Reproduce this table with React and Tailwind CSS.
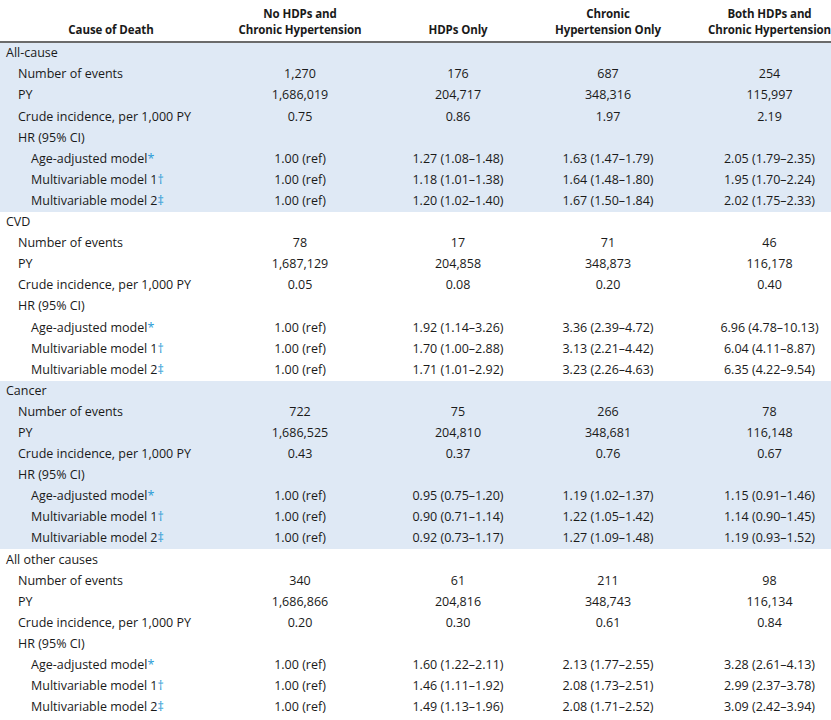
import React from "react";

const sections = [
  {
    name: "All-cause",
    shaded: true,
    events: ["1,270", "176", "687", "254"],
    py: ["1,686,019", "204,717", "348,316", "115,997"],
    crude: ["0.75", "0.86", "1.97", "2.19"],
    age: ["1.00 (ref)", "1.27 (1.08–1.48)", "1.63 (1.47–1.79)", "2.05 (1.79–2.35)"],
    m1: ["1.00 (ref)", "1.18 (1.01–1.38)", "1.64 (1.48–1.80)", "1.95 (1.70–2.24)"],
    m2: ["1.00 (ref)", "1.20 (1.02–1.40)", "1.67 (1.50–1.84)", "2.02 (1.75–2.33)"],
  },
  {
    name: "CVD",
    shaded: false,
    events: ["78", "17", "71", "46"],
    py: ["1,687,129", "204,858", "348,873", "116,178"],
    crude: ["0.05", "0.08", "0.20", "0.40"],
    age: ["1.00 (ref)", "1.92 (1.14–3.26)", "3.36 (2.39–4.72)", "6.96 (4.78–10.13)"],
    m1: ["1.00 (ref)", "1.70 (1.00–2.88)", "3.13 (2.21–4.42)", "6.04 (4.11–8.87)"],
    m2: ["1.00 (ref)", "1.71 (1.01–2.92)", "3.23 (2.26–4.63)", "6.35 (4.22–9.54)"],
  },
  {
    name: "Cancer",
    shaded: true,
    events: ["722", "75", "266", "78"],
    py: ["1,686,525", "204,810", "348,681", "116,148"],
    crude: ["0.43", "0.37", "0.76", "0.67"],
    age: ["1.00 (ref)", "0.95 (0.75–1.20)", "1.19 (1.02–1.37)", "1.15 (0.91–1.46)"],
    m1: ["1.00 (ref)", "0.90 (0.71–1.14)", "1.22 (1.05–1.42)", "1.14 (0.90–1.45)"],
    m2: ["1.00 (ref)", "0.92 (0.73–1.17)", "1.27 (1.09–1.48)", "1.19 (0.93–1.52)"],
  },
  {
    name: "All other causes",
    shaded: false,
    events: ["340", "61", "211", "98"],
    py: ["1,686,866", "204,816", "348,743", "116,134"],
    crude: ["0.20", "0.30", "0.61", "0.84"],
    age: ["1.00 (ref)", "1.60 (1.22–2.11)", "2.13 (1.77–2.55)", "3.28 (2.61–4.13)"],
    m1: ["1.00 (ref)", "1.46 (1.11–1.92)", "2.08 (1.73–2.51)", "2.99 (2.37–3.78)"],
    m2: ["1.00 (ref)", "1.49 (1.13–1.96)", "2.08 (1.71–2.52)", "3.09 (2.42–3.94)"],
  },
];

const GRID = "grid grid-cols-[222px_156px_160px_170px_123px]";

function Row({ label, indent, values, mark }) {
  const pad = indent === 0 ? "pl-[6px]" : indent === 1 ? "pl-[18px]" : "pl-[31px]";
  return (
    <div className={`${GRID} h-[21.1px] items-center`}>
      <div className={`${pad} whitespace-nowrap`}>
        {label}
        {mark && <span className="text-[#2a9bd6]">{mark}</span>}
      </div>
      {[0, 1, 2, 3].map((i) => (
        <div key={i} className={`text-center whitespace-nowrap ${i === 2 ? "pr-[30px]" : ""}`}>
          {values ? values[i] : ""}
        </div>
      ))}
    </div>
  );
}

export default function App() {
  return (
    <div
      className="w-[831px] h-[720px] overflow-hidden bg-white text-[#1a1a1a] text-[12.5px] leading-none"
      style={{ fontFamily: '"Open Sans", "Noto Sans", sans-serif' }}
    >
      <div className={`${GRID} h-[43px] items-end pb-[3px] border-b-2 border-[#6b6b6b] font-bold text-[11.5px] leading-[16px] tracking-[-0.1px]`}>
        <div className="text-center">Cause of Death</div>
        <div className="text-center">No HDPs and<br />Chronic Hypertension</div>
        <div className="text-center">HDPs Only</div>
        <div className="text-center pr-[30px]">Chronic<br />Hypertension Only</div>
        <div className="text-center whitespace-nowrap">Both HDPs and<br />Chronic Hypertension</div>
      </div>
      {sections.map((s) => (
        <div key={s.name} className={s.shaded ? "bg-[#dfe9f5]" : "bg-white"}>
          <Row label={s.name} indent={0} />
          <Row label="Number of events" indent={1} values={s.events} />
          <Row label="PY" indent={1} values={s.py} />
          <Row label="Crude incidence, per 1,000 PY" indent={1} values={s.crude} />
          <Row label="HR (95% CI)" indent={1} />
          <Row label="Age-adjusted model" mark="*" indent={2} values={s.age} />
          <Row label="Multivariable model 1" mark="†" indent={2} values={s.m1} />
          <Row label="Multivariable model 2" mark="‡" indent={2} values={s.m2} />
        </div>
      ))}
    </div>
  );
}
